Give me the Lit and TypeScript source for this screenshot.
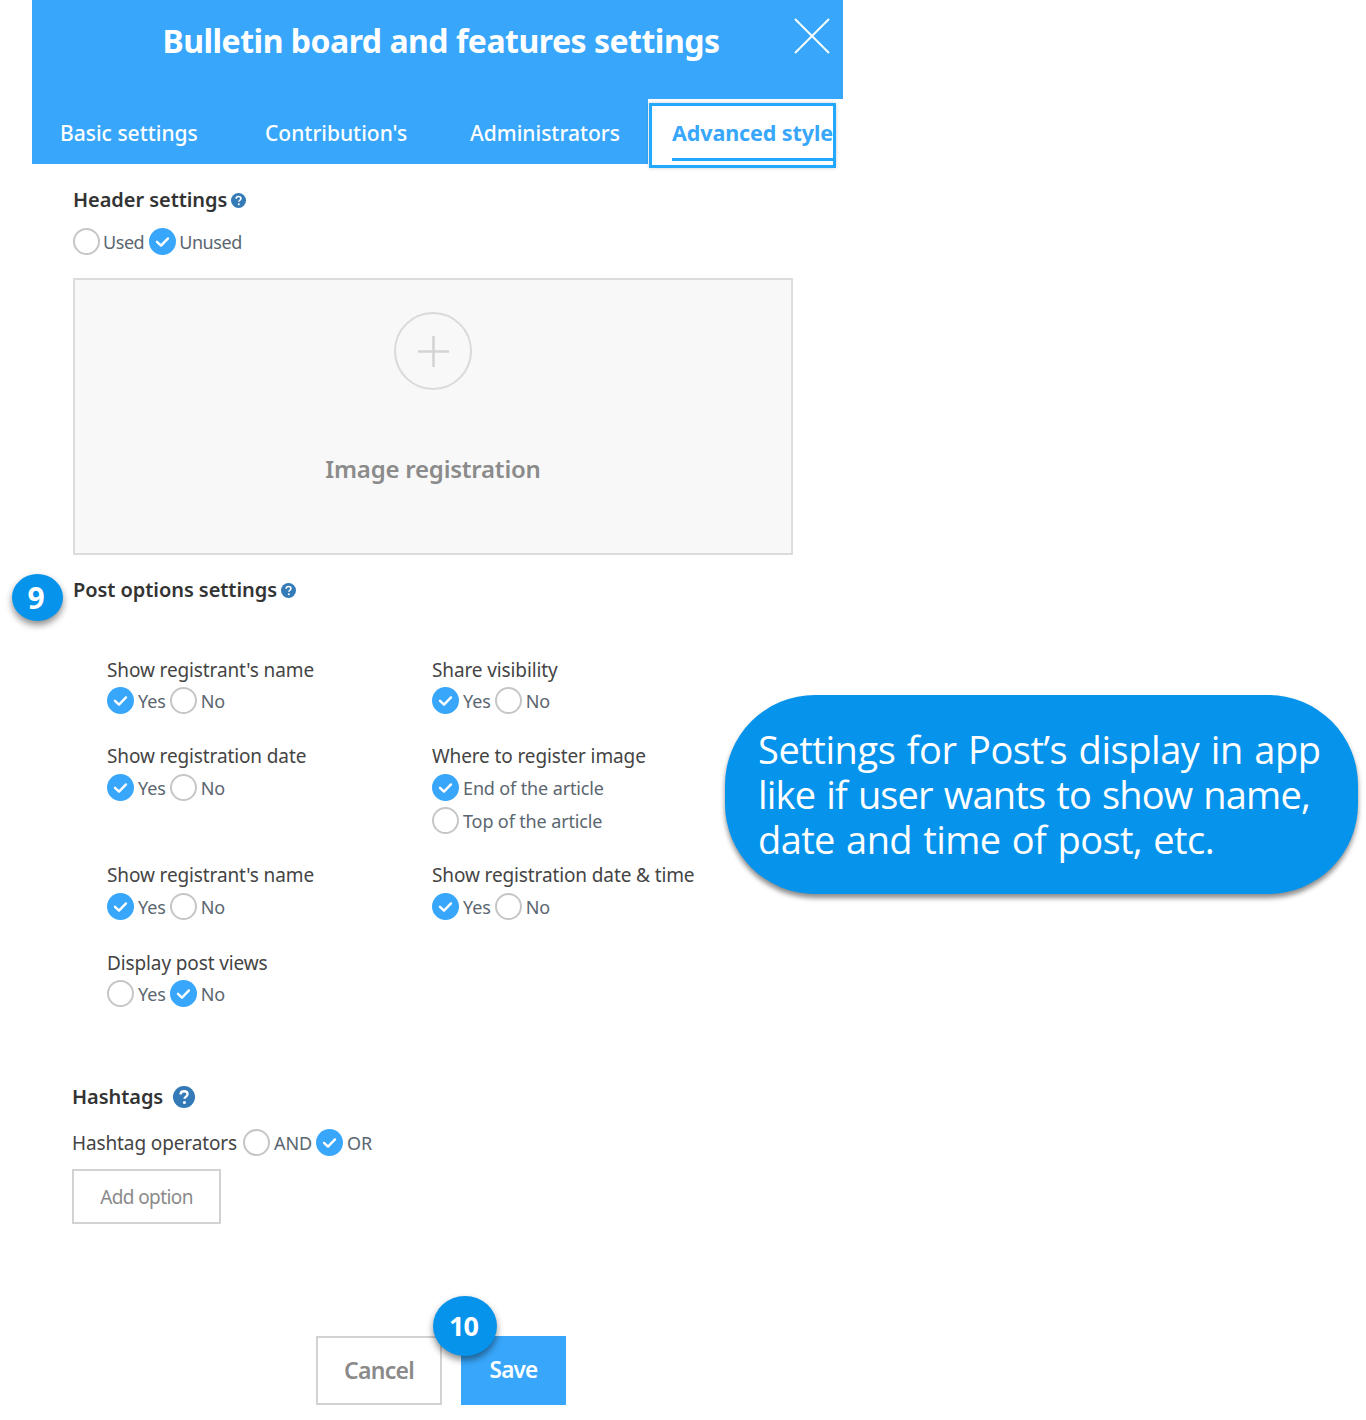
import { LitElement, html, css, svg } from "lit";
import { customElement } from "lit/decorators.js";

const radio = (label: string, on: boolean) => html`
  <span class="opt">
    <span class="radio ${on ? "on" : ""}">
      ${on ? svg`<svg viewBox="0 0 27 27" width="27" height="27"><path d="M8 13.8l4 3.8 7-7.2" fill="none" stroke="#fff" stroke-width="2.4" stroke-linecap="round" stroke-linejoin="round"/></svg>` : ""}
    </span>
    <span class="optlabel">${label}</span>
  </span>
`;

const help = (size: number) => html`
  <svg class="help" viewBox="0 0 16 16" width=${size} height=${size}>
    <circle cx="8" cy="8" r="8" fill="#337ab7"/>
    <path d="M5.5 6.2c0-1.5 1.1-2.4 2.6-2.4s2.5.9 2.5 2.1c0 1-.6 1.5-1.3 2-.6.4-.9.7-.9 1.4" fill="none" stroke="#fff" stroke-width="1.7"/>
    <circle cx="8.3" cy="12" r="1.1" fill="#fff"/>
  </svg>
`;

@customElement("app-root")
export class AppRoot extends LitElement {
  static styles = css`
    :host { display: block; position: relative; height: 1420px; background: #fff; font-family: "Noto Sans", "Open Sans", sans-serif; color: #333; overflow: hidden; }
    .panel { width: 811px; margin-left: 32px; }
    .head { background: #38a7fb; height: 164px; position: relative; }
    .titlebar { height: 80px; display: flex; align-items: center; justify-content: center; padding-left: 7px; box-sizing: border-box; }
    .title { color: #fff; font-size: 32px; font-weight: 700; letter-spacing: -0.5px; white-space: nowrap; }
    .close { position: absolute; left: 762px; top: 18px; }
    .tab { color: #fff; font-size: 21px; font-weight: 500; position: absolute; top: 118px; line-height: 30px; white-space: nowrap; }
    .notch { position: absolute; left: 616px; top: 99px; right: 0; height: 65px; background: #fff; }
    .active { position: absolute; left: 1px; top: 4px; width: 187px; height: 65px; background: #fff; box-sizing: border-box; border: 3px solid #22a9ff; box-shadow: 0 0 4px rgba(0,0,0,.2); overflow: hidden; }
    .active span { position: absolute; left: 20px; top: 12px; color: #38a7fb; font-size: 21.5px; font-weight: 700; letter-spacing: -0.1px; line-height: 30px; white-space: nowrap; }
    .active i { position: absolute; left: 20px; right: 0; top: 52px; height: 3px; background: #22a9ff; }
    .content { padding-left: 41px; }
    .h { display: flex; align-items: center; font-size: 20px; font-weight: 600; color: #333; letter-spacing: -0.06px; line-height: 28px; white-space: nowrap; }
    .help { margin-left: 4px; flex: none; }
    .opts { display: flex; align-items: center; height: 27px; white-space: nowrap; }
    .opt { display: inline-flex; align-items: center; }
    .radio { width: 27px; height: 27px; box-sizing: border-box; border-radius: 50%; border: 2px solid #c6c6c6; background: #fff; flex: none; display: inline-block; overflow: hidden; }
    .radio.on { border: 0; background: #38a7fb; }
    .optlabel { font-size: 18px; color: #5a6670; margin: 0 4px 0 4px; letter-spacing: -0.13px; }
    .tight .optlabel { margin: 0 5px 0 3px; letter-spacing: -0.45px; }
    .box { width: 720px; height: 277px; box-sizing: border-box; border: 2px solid #dcdcdc; background: #f8f8f8; margin-top: 23px; display: flex; flex-direction: column; align-items: center; }
    .plus { width: 78px; height: 78px; box-sizing: border-box; border: 2px solid #dadada; border-radius: 50%; margin-top: 32px; display: flex; align-items: center; justify-content: center; }
    .boxlabel { font-size: 24px; font-weight: 600; color: #8b8b8b; margin-top: 62px; letter-spacing: -0.22px; line-height: 34px; }
    .grid { display: grid; grid-template-columns: 325px 300px; margin-left: 34px; }
    .f { font-size: 19px; color: #444; letter-spacing: -0.12px; line-height: 26px; white-space: nowrap; }
    .cell { display: flex; flex-direction: column; gap: 5px; }
    .snug .cell { gap: 4px; }
    .stack { display: flex; flex-direction: column; gap: 6px; }
    .ops { display: flex; align-items: center; gap: 6px; height: 27px; margin-top: 18px; margin-left: -1px; }
    .btn { box-sizing: border-box; display: flex; align-items: center; justify-content: center; border: 2px solid #d2d2d2; background: #fff; color: #8a8a8a; white-space: nowrap; }
    .add { width: 149px; height: 55px; font-size: 19px; margin-top: 13px; margin-left: -1px; letter-spacing: -0.6px; padding-top: 1px; }
    .actions { display: flex; margin: 112px 0 0 243px; gap: 19px; }
    .cancel { width: 126px; height: 69px; font-size: 23px; font-weight: 600; letter-spacing: -0.7px; padding-bottom: 2px; }
    .save { width: 105px; height: 69px; font-size: 22.5px; font-weight: 600; letter-spacing: -0.8px; background: #38a7fb; border: 0; color: #fff; padding-bottom: 2px; }
    .badge { position: absolute; border-radius: 50%; background: #0593ec; color: #fff; font-weight: 700; display: flex; align-items: center; justify-content: center; box-shadow: 0 4px 7px rgba(0,0,0,.45); }
    .b9 { left: 12px; top: 574px; width: 51px; height: 47px; font-size: 30px; padding-right: 3px; box-sizing: border-box; }
    .b10 { left: 433px; top: 1296px; width: 64px; height: 60px; font-size: 27px; letter-spacing: -1px; padding: 0 3px 2px 0; box-sizing: border-box; }
    .callout { position: absolute; left: 725px; top: 695px; width: 633px; height: 199px; box-sizing: border-box; border-radius: 90px; background: #0593ec; box-shadow: 0 4px 5px rgba(0,0,0,.45); color: #fff; font-size: 38px; word-spacing: 2px; line-height: 45px; padding: 32px 0 0 33px; white-space: nowrap; letter-spacing: -0.45px; font-family: "Open Sans", sans-serif; }
    .callout div:nth-child(2) { letter-spacing: -0.84px; }
    .callout div:nth-child(3) { letter-spacing: -0.6px; }
  `;

  private field(label: string, aOn: boolean) {
    return html`<div class="cell">
      <div class="f">${label}</div>
      <div class="opts">${radio("Yes", aOn)}${radio("No", !aOn)}</div>
    </div>`;
  }

  render() {
    return html`
      <div class="panel">
        <header class="head">
          <div class="titlebar"><div class="title">Bulletin board and features settings</div></div>
          <svg class="close" width="36" height="36" viewBox="0 0 36 36"><path d="M1 1l34 34M35 1L1 35" stroke="#fff" stroke-width="1.8" fill="none"/></svg>
          <span class="tab" style="left:28px">Basic settings</span>
          <span class="tab" style="left:233px">Contribution's</span>
          <span class="tab" style="left:438px">Administrators</span>
          <div class="notch"><div class="active"><span>Advanced style</span><i></i></div></div>
        </header>
        <div class="content">
          <div class="h" style="margin-top:22px">Header settings${help(15)}</div>
          <div class="opts tight" style="margin-top:14px">${radio("Used", false)}${radio("Unused", true)}</div>
          <div class="box">
            <div class="plus"><svg width="31" height="31" viewBox="0 0 31 31"><path d="M15.5 0v31M0 15.5h31" stroke="#d4d4d4" stroke-width="2.6" fill="none"/></svg></div>
            <div class="boxlabel">Image registration</div>
          </div>
          <div class="h" style="margin-top:21px">Post options settings${help(15)}</div>
          <div class="grid snug" style="margin-top:53px">
            ${this.field("Show registrant's name", true)}
            ${this.field("Share visibility", true)}
          </div>
          <div class="grid" style="margin-top:29px;height:87px">
            ${this.field("Show registration date", true)}
            <div class="cell">
              <div class="f">Where to register image</div>
              <div class="stack">
                <div class="opts">${radio("End of the article", true)}</div>
                <div class="opts">${radio("Top of the article", false)}</div>
              </div>
            </div>
          </div>
          <div class="grid" style="margin-top:32px">
            ${this.field("Show registrant's name", true)}
            ${this.field("Show registration date & time", true)}
          </div>
          <div class="grid snug" style="margin-top:30px">
            ${this.field("Display post views", false)}
          </div>
          <div class="h" style="margin-top:76px;margin-left:-1px">Hashtags<span style="width:6px"></span>${help(22)}</div>
          <div class="ops">
            <span class="f">Hashtag operators</span>
            <span class="opts">${radio("AND", false)}${radio("OR", true)}</span>
          </div>
          <div class="btn add">Add option</div>
          <div class="actions">
            <div class="btn cancel">Cancel</div>
            <div class="btn save">Save</div>
          </div>
        </div>
      </div>
      <div class="badge b9">9</div>
      <div class="badge b10">10</div>
      <div class="callout"><div>Settings for Post’s display in app</div><div>like if user wants to show name,</div><div>date and time of post, etc.</div></div>
    `;
  }
}
